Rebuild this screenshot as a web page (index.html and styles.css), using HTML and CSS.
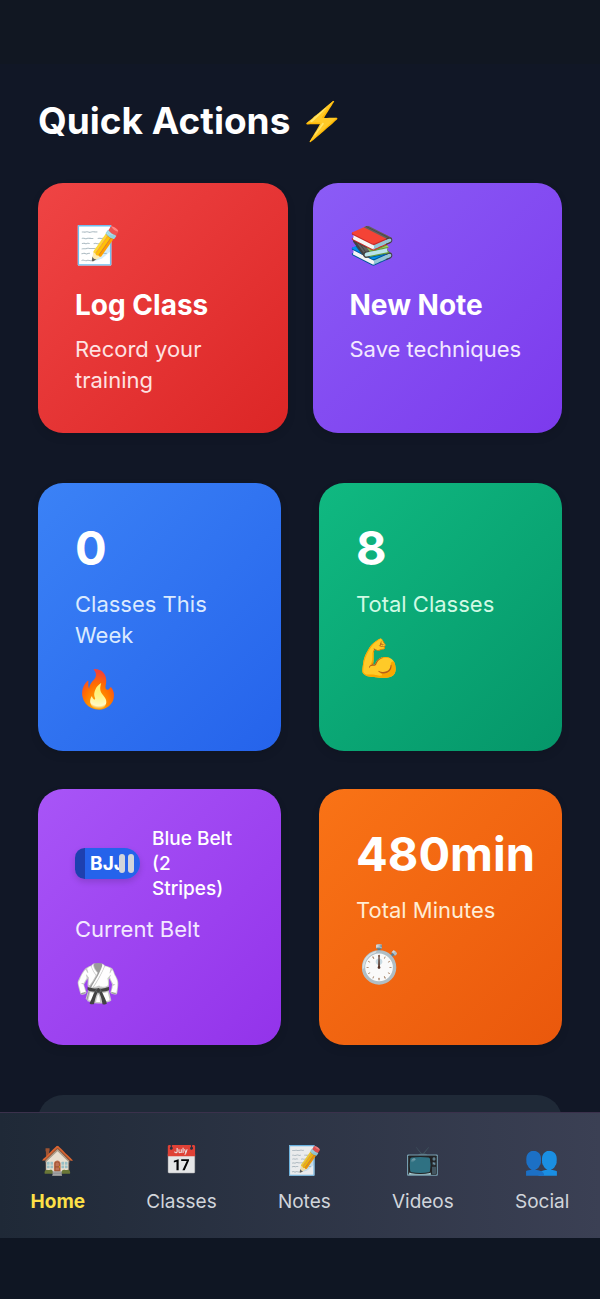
FILE: index.html
```html
<!DOCTYPE html>
<html lang="en">
<head>
<meta charset="utf-8">
<meta name="viewport" content="width=device-width, initial-scale=1">
<title>Quick Actions</title>
<link rel="stylesheet" href="styles.css">
</head>
<body>
<main class="page">
  <h1 class="title">Quick Actions <span class="emoji">⚡</span></h1>
  <section class="actions">
    <button type="button" class="card action red">
      <span class="emoji icon">📝</span>
      <span class="action-title">Log Class</span>
      <span class="label">Record your training</span>
    </button>
    <button type="button" class="card action violet">
      <span class="emoji icon">📚</span>
      <span class="action-title">New Note</span>
      <span class="label">Save techniques</span>
    </button>
  </section>
  <section class="stats">
    <div class="card stat blue">
      <div class="number">0</div>
      <div class="label">Classes This Week</div>
      <div class="emoji icon">🔥</div>
    </div>
    <div class="card stat green">
      <div class="number">8</div>
      <div class="label">Total Classes</div>
      <div class="emoji icon">💪</div>
    </div>
    <div class="card stat purple">
      <div class="belt-row">
        <div class="belt"><span class="belt-text">BJJ</span><span class="stripes"><i></i><i></i></span></div>
        <span class="belt-name">Blue Belt (2 Stripes)</span>
      </div>
      <div class="label">Current Belt</div>
      <div class="emoji icon">🥋</div>
    </div>
    <div class="card stat orange">
      <div class="number">480min</div>
      <div class="label">Total Minutes</div>
      <div class="emoji icon">⏱️</div>
    </div>
  </section>
  <section class="panel"></section>
</main>
<footer class="dock">
  <nav class="nav">
    <a href="#home" class="nav-item active"><span class="emoji nav-icon">🏠</span>Home</a>
    <a href="#classes" class="nav-item"><span class="emoji nav-icon">📅</span>Classes</a>
    <a href="#notes" class="nav-item"><span class="emoji nav-icon">📝</span>Notes</a>
    <a href="#videos" class="nav-item"><span class="emoji nav-icon">📺</span>Videos</a>
    <a href="#social" class="nav-item"><span class="emoji nav-icon">👥</span>Social</a>
  </nav>
</footer>
</body>
</html>
```
FILE: styles.css
```css
* { box-sizing: border-box; }
body {
  margin: 0;
  height: 100vh;
  display: flex;
  flex-direction: column;
  overflow: hidden;
  background: #111726;
  color: #fff;
  font-family: Inter, "Noto Color Emoji", sans-serif;
}
.page {
  flex: 1;
  min-height: 0;
  overflow: hidden;
  padding: 96px 38px 0;
  background: linear-gradient(#111722 64px, #111726 64px);
}
.title { margin: 0 0 37px; font-size: 37px; line-height: 50px; font-weight: 700; }
.actions { display: grid; grid-template-columns: 1fr 1fr; gap: 25px; margin-bottom: 50px; }
.stats { display: grid; grid-template-columns: 1fr 1fr; gap: 38px; margin-bottom: 50px; }
.card {
  min-width: 0;
  display: flex;
  flex-direction: column;
  align-items: flex-start;
  justify-content: flex-start;
  padding: 37px;
  border: 0;
  border-radius: 25px;
  color: #fff;
  font-family: inherit;
  text-align: left;
  box-shadow: 0 4px 8px rgba(0, 0, 0, 0.1);
}
.red { background: linear-gradient(135deg, #ef4444, #dc2626); color: #fee2e2; }
.violet { background: linear-gradient(135deg, #8b5cf6, #7c3aed); color: #f3e8ff; }
.blue { background: linear-gradient(135deg, #3b82f6, #2563eb); color: #dbeafe; }
.green { background: linear-gradient(135deg, #10b981, #059669); color: #d1fae5; }
.purple { background: linear-gradient(135deg, #a855f7, #9333ea); color: #f3e8ff; }
.orange { background: linear-gradient(135deg, #f97316, #ea580c); color: #ffedd5; }
.icon { font-size: 37px; line-height: 50px; height: 50px; }
.action .icon { margin-bottom: 13px; }
.action-title { font-size: 28px; line-height: 44px; font-weight: 700; color: #fff; margin-bottom: 7px; }
.label { font-size: 22px; line-height: 31px; }
.stat { gap: 13px; }
.number { font-size: 47px; line-height: 56px; font-weight: 700; color: #fff; }
.belt-row { display: flex; align-items: center; gap: 12px; }
.belt {
  position: relative;
  flex: none;
  width: 65px;
  height: 31px;
  display: flex;
  align-items: center;
  justify-content: center;
  border-radius: 10px 16px 16px 10px;
  background: linear-gradient(90deg, #1e40af 10px, #2563eb 10px);
  color: #fff;
  box-shadow: 0 3px 6px rgba(0, 0, 0, 0.15);
}
.belt-text { font-size: 19px; line-height: 25px; font-weight: 700; }
.stripes { position: absolute; right: 6px; top: 6px; display: flex; gap: 3px; }
.stripes i { width: 6px; height: 19px; border-radius: 3px; background: #d1d5db; }
.belt-name { font-size: 19px; line-height: 25px; font-weight: 500; color: #fff; }
.panel { height: 200px; border-radius: 25px; background: #1f2937; }
.dock { flex: none; padding-bottom: 61px; background: #0f1623; }
.nav {
  display: flex;
  justify-content: space-around;
  padding: 25px 0 24px;
  border-top: 1px solid #3b314c;
  background: linear-gradient(90deg, #1f2937, #3b4054);
}
.nav-item {
  display: flex;
  flex-direction: column;
  align-items: center;
  gap: 7px;
  color: #d1d5db;
  font-size: 19px;
  line-height: 25px;
  text-decoration: none;
}
.nav-icon { font-size: 28px; line-height: 44px; height: 44px; opacity: 0.9; }
.active { color: #fde047; font-weight: 700; }
```
